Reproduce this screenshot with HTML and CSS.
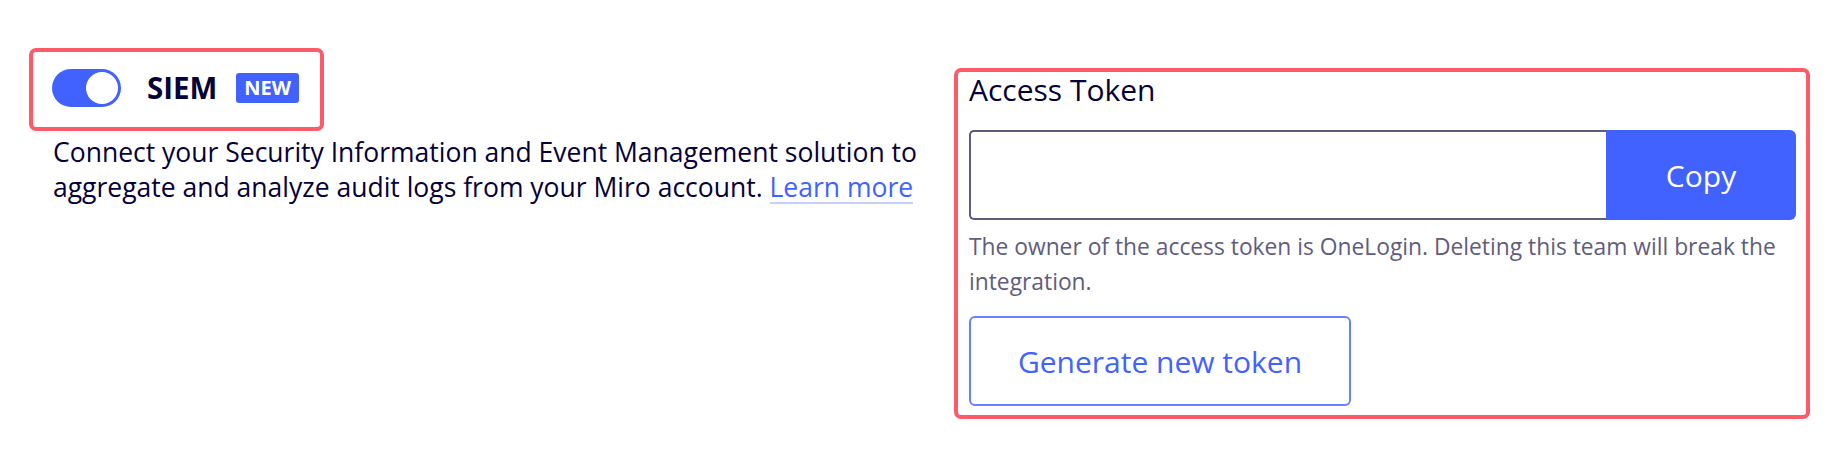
FILE: index.html
```html
<!DOCTYPE html>
<html lang="en">
<head>
    <meta charset="UTF-8">
    <meta name="viewport" content="width=device-width, initial-scale=1.0">
    <title>SIEM</title>
    <link rel="stylesheet" href="styles.css">
</head>
<body>

<div class="page">
    <div class="siem-info">
        <div class="siem-header highlight">
            <div class="toggle"><span class="knob"></span></div>
            <span class="siem-title">SIEM</span>
            <span class="badge">NEW</span>
        </div>
        <p class="siem-text">Connect your Security Information and Event Management solution to aggregate and analyze audit logs from your Miro account. <a href="#" class="link">Learn more</a></p>
    </div>

    <div class="token-panel highlight">
        <div class="token-label">Access Token</div>
        <div class="token-row">
            <input type="text" class="token-input">
            <button class="copy-button">Copy</button>
        </div>
        <p class="token-hint">The owner of the access token is OneLogin. Deleting this team will break the integration.</p>
        <button class="generate-button">Generate new token</button>
    </div>
</div>

</body>
</html>
```

FILE: styles.css
```css
body {
    margin: 0;
    font-family: "Open Sans", Arial, sans-serif;
    background-color: #ffffff;
    color: #050038;
}
.page {
    display: flex;
    align-items: flex-start;
    gap: 24px;
    padding: 48px 20px 0 29px;
}
.siem-info {
    flex: 1;
}
.highlight {
    border: 4px solid #ff5a68;
    border-radius: 7px;
}
.siem-header {
    display: inline-flex;
    align-items: center;
    padding: 17px 21px 20px 19px;
}
.toggle {
    width: 69px;
    height: 38px;
    box-sizing: border-box;
    padding: 3px;
    border-radius: 19px;
    background-color: #4262ff;
    display: flex;
    justify-content: flex-end;
}
.knob {
    width: 32px;
    height: 32px;
    border-radius: 50%;
    background-color: #ffffff;
}
.siem-title {
    margin-left: 26px;
    font-size: 29.5px;
    font-weight: 700;
    line-height: 38px;
}
.badge {
    margin-left: 19px;
    padding: 0 8px;
    height: 30px;
    line-height: 30px;
    font-size: 20px;
    font-weight: 700;
    color: #ffffff;
    background-color: #4262ff;
    border-radius: 3px;
}
.siem-text {
    margin: 4px 0 0 24px;
    font-size: 26.5px;
    line-height: 35px;
}
.link {
    display: inline-block;
    line-height: 30px;
    color: #4262ff;
    text-decoration: none;
    border-bottom: 2px solid #c6d0ff;
}
.token-panel {
    width: 856px;
    box-sizing: border-box;
    margin-top: 20px;
    padding: 0 10px 9px 11px;
}
.token-label {
    font-size: 30px;
    line-height: 36px;
}
.token-row {
    display: flex;
    margin-top: 22px;
    height: 90px;
}
.token-input {
    flex: 1;
    box-sizing: border-box;
    border: 2px solid #5c5c7c;
    border-right: none;
    border-radius: 5px 0 0 5px;
    font-family: inherit;
    font-size: 22px;
    padding: 0 16px;
    outline: none;
}
.copy-button {
    width: 190px;
    border: none;
    border-radius: 0 6px 6px 0;
    background-color: #4262ff;
    color: #ffffff;
    font-family: inherit;
    font-size: 30px;
}
.token-hint {
    margin: 9px 0 0;
    font-size: 22.8px;
    line-height: 35px;
    color: #5f5d7d;
}
.generate-button {
    margin-top: 17px;
    width: 382px;
    height: 90px;
    border: 2px solid #6b80ff;
    border-radius: 6px;
    background-color: #ffffff;
    color: #4262ff;
    font-family: inherit;
    font-size: 30px;
}
```
